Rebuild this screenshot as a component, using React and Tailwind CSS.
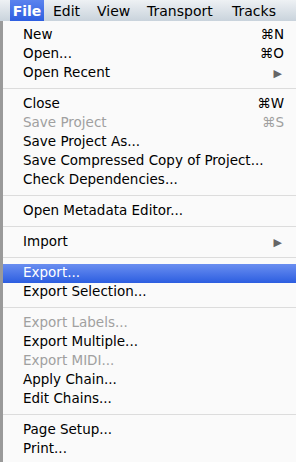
const sections = [
  [
    { label: "New", key: "⌘N" },
    { label: "Open...", key: "⌘O" },
    { label: "Open Recent", arrow: true },
  ],
  [
    { label: "Close", key: "⌘W" },
    { label: "Save Project", key: "⌘S", disabled: true },
    { label: "Save Project As..." },
    { label: "Save Compressed Copy of Project..." },
    { label: "Check Dependencies..." },
  ],
  [{ label: "Open Metadata Editor..." }],
  [{ label: "Import", arrow: true }],
  [
    { label: "Export...", active: true },
    { label: "Export Selection..." },
  ],
  [
    { label: "Export Labels...", disabled: true },
    { label: "Export Multiple..." },
    { label: "Export MIDI...", disabled: true },
    { label: "Apply Chain..." },
    { label: "Edit Chains..." },
  ],
  [{ label: "Page Setup..." }, { label: "Print..." }],
];

function MenuItem({ label, shortcut, arrow, disabled, active }) {
  return (
    <div
      className={`flex h-[19px] items-center justify-between pl-5 pr-3 ${
        active
          ? "bg-gradient-to-b from-[#6a8ef0] to-[#2c5de0] text-white"
          : disabled
            ? "text-[#a0a0a0]"
            : "text-black"
      }`}
    >
      <span>{label}</span>
      {shortcut && <span>{shortcut}</span>}
      {arrow && <span className="pr-[2px] text-[11px] text-[#666]">▶</span>}
    </div>
  );
}

export default function App() {
  return (
    <div
      className="h-[462px] w-[296px] overflow-hidden bg-[#9a9a9a] text-[13.5px] leading-none"
      style={{ fontFamily: '"DejaVu Sans", Verdana, sans-serif' }}
    >
      {/* Menu bar */}
      <div className="flex h-[21px] items-center bg-gradient-to-b from-[#eef1f4] to-[#c9d3dc] text-[14px] text-black">
        <div className="ml-[10px] flex h-full w-[34px] items-center justify-center bg-gradient-to-b from-[#5b83ee] to-[#2d5ee0] font-bold text-white">
          File
        </div>
        <span className="ml-[9px] w-[44px]">Edit</span>
        <span className="w-[50px]">View</span>
        <span className="w-[85px]">Transport</span>
        <span>Tracks</span>
      </div>

      {/* Dropdown */}
      <div className="ml-[3px] h-[441px] bg-[#fafafa] pt-[4.5px]">
        {sections.map((items, i) => (
          <div key={i}>
            {i > 0 && (
              <div className="flex h-[12px] items-center">
                <div className="h-px w-full bg-[#dcdcdc]" />
              </div>
            )}
            {items.map((item) => (
              <MenuItem
                key={item.label}
                label={item.label}
                shortcut={item.key}
                arrow={item.arrow}
                disabled={item.disabled}
                active={item.active}
              />
            ))}
          </div>
        ))}
      </div>
    </div>
  );
}
